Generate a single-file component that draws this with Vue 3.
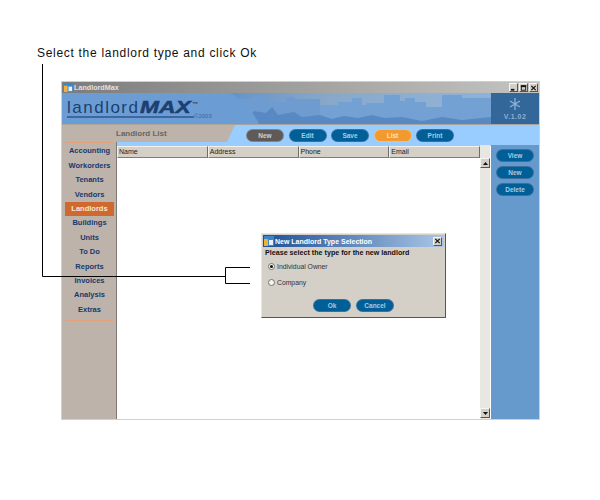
<script setup>
const menu = ['Accounting', 'Workorders', 'Tenants', 'Vendors', 'Landlords', 'Buildings', 'Units', 'To Do', 'Reports', 'Invoices', 'Analysis', 'Extras']
const toolbar = ['New', 'Edit', 'Save', 'List', 'Print']
const columns = ['Name', 'Address', 'Phone', 'Email']
const actions = ['View', 'New', 'Delete']
</script>

<template>
  <div class="page">
    <p class="caption">Select the landlord type and click Ok</p>

    <div class="window">
      <div class="titlebar">
        <svg class="app-icon" width="9" height="9" viewBox="0 0 10 10">
          <rect width="10" height="10" fill="#3a86c8" />
          <rect y="3" width="4" height="7" fill="#f0b040" />
          <rect x="5" y="4" width="4" height="5" fill="#e8f0f8" />
        </svg>
        <span class="title">LandlordMax</span>
        <div class="win-buttons">
          <span class="win-btn">
            <svg width="8" height="8" viewBox="0 0 8 8"><rect x="1" y="5" width="4" height="2" fill="#111" /></svg>
          </span>
          <span class="win-btn">
            <svg width="8" height="8" viewBox="0 0 8 8"><rect x="1.5" y="1.5" width="5" height="5" fill="none" stroke="#111" /><rect x="1" y="1" width="6" height="2" fill="#111" /></svg>
          </span>
          <span class="win-btn">
            <svg width="8" height="8" viewBox="0 0 8 8"><path d="M1.5 1.5 L6.5 6.5 M6.5 1.5 L1.5 6.5" stroke="#111" stroke-width="1.4" /></svg>
          </span>
        </div>
      </div>

      <div class="banner">
        <div class="banner-art">
          <svg class="skyline" width="429" height="31" viewBox="0 0 429 31">
            <defs>
              <linearGradient id="sky" x1="0" x2="1" y1="0" y2="0">
                <stop offset="0.38" stop-color="#6492c8" />
                <stop offset="0.62" stop-color="#88a8ca" />
                <stop offset="0.86" stop-color="#8fb0d2" />
                <stop offset="1" stop-color="#8db2da" />
              </linearGradient>
            </defs>
            <rect width="429" height="31" fill="url(#sky)" />
            <path d="M160 31 V6 H190 V2 H204 V9 H224 V4 H232 V6 H258 V31 Z" fill="#6f9cd0" />
            <path d="M258 31 V12 H276 V9 H290 V5 H300 V12 H304 V10 H322 V2 H338 V8 H343 V5 H353 V9 H364 V14 H380 V2 H400 V5 H429 V31 Z" fill="#74a1d4" />
            <path d="M170 31 L178 22 L188 22 L192 18 L204 20 L210 14 L216 22 L232 19 L240 24 L258 22 L270 26 L282 23 L296 25 L310 22 L322 25 L340 24 L360 28 L380 24 L400 27 L429 24 V31 Z" fill="#5889c2" />
            <path d="M0 0 H168 C182 8 192 20 197 31 H0 Z" fill="#6b9dd4" />
          </svg>
          <div class="logo">
            <span class="logo-light">landlord</span><span class="logo-bold">MAX</span><span class="logo-tm">™</span>
            <span class="logo-year">©2003</span>
          </div>
        </div>
        <div class="version">
          <svg width="14" height="14" viewBox="0 0 14 14">
            <path d="M7 1 V13 M2 4 L12 10 M12 4 L2 10" stroke="#8cb4dc" stroke-width="1.3" />
          </svg>
          <span class="version-text">V.1.02</span>
        </div>
      </div>

      <div class="toolbar">
        <div class="list-title">Landlord List</div>
        <div class="toolbar-buttons">
          <button
            v-for="b in toolbar"
            :key="b"
            class="pill"
            :class="{ grey: b === 'New', orange: b === 'List' }"
          >{{ b }}</button>
        </div>
      </div>

      <div class="body">
        <nav class="sidebar">
          <a v-for="m in menu" :key="m" class="menu-item" :class="{ active: m === 'Landlords' }">{{ m }}</a>
          <div class="menu-rule"></div>
        </nav>

        <div class="table">
          <div class="table-head">
            <span v-for="c in columns" :key="c" class="th">{{ c }}</span>
          </div>
        </div>

        <div class="scrollbar">
          <span class="scroll-btn">
            <svg width="5" height="3" viewBox="0 0 5 3"><path d="M2.5 0 L5 3 H0 Z" fill="#111" /></svg>
          </span>
          <span class="scroll-btn">
            <svg width="5" height="3" viewBox="0 0 5 3"><path d="M0 0 H5 L2.5 3 Z" fill="#111" /></svg>
          </span>
        </div>

        <div class="actions">
          <button v-for="a in actions" :key="a" class="pill">{{ a }}</button>
        </div>
      </div>
    </div>

    <!-- dialog floats over the list -->
    <div class="dialog">
      <div class="dialog-title">
        <svg class="app-icon" width="10" height="10" viewBox="0 0 10 10">
          <rect width="10" height="10" fill="#3a86c8" />
          <rect y="3" width="4" height="7" fill="#f0b040" />
          <rect x="5" y="4" width="4" height="5" fill="#e8f0f8" />
        </svg>
        <span>New Landlord Type Selection</span>
        <span class="win-btn dialog-close">
          <svg width="8" height="8" viewBox="0 0 8 8"><path d="M1.5 1.5 L6.5 6.5 M6.5 1.5 L1.5 6.5" stroke="#111" stroke-width="1.4" /></svg>
        </span>
      </div>
      <div class="dialog-body">
        <p class="question">Please select the type for the new landlord</p>
        <label class="radio-row"><span class="radio checked"></span>Individual Owner</label>
        <label class="radio-row"><span class="radio"></span>Company</label>
        <div class="dialog-buttons">
          <button class="pill">Ok</button>
          <button class="pill">Cancel</button>
        </div>
      </div>
    </div>

    <!-- callout lines -->
    <svg class="callout" width="600" height="500" viewBox="0 0 600 500">
      <path d="M42.5 64 V276.5 H225.5 M250 267.5 H225.5 V283.5 H250" fill="none" stroke="#000" />
    </svg>
  </div>
</template>

<style scoped>
.page {
  position: relative;
  width: 600px;
  height: 500px;
  background: #fff;
  overflow: hidden;
  font-family: "Liberation Sans", Arial, sans-serif;
}

.caption {
  margin: 0;
  padding: 46px 0 0 37px;
  height: 81px;
  box-sizing: border-box;
  font-size: 12px;
  line-height: 14px;
  letter-spacing: 0.7px;
  color: #111;
}

.window {
  margin-left: 61px;
  width: 479px;
  height: 339px;
  box-sizing: border-box;
  border: 1px solid #d4d0c8;
  display: flex;
  flex-direction: column;
}

.titlebar {
  height: 11px;
  flex: none;
  display: flex;
  align-items: center;
  gap: 1px;
  padding: 0 1px 0 2px;
  background: linear-gradient(to right, #7c7c7c, #c4c4c2);
  color: #e0e0e0;
  font-size: 7.2px;
  font-weight: bold;
}

.win-buttons {
  margin-left: auto;
  display: flex;
  gap: 1px;
}

.win-btn {
  width: 9px;
  height: 9px;
  display: flex;
  align-items: center;
  justify-content: center;
  background: #d4d0c8;
  border: 1px solid;
  border-color: #f4f4f0 #555 #555 #f4f4f0;
  box-sizing: border-box;
  overflow: hidden;
}

.banner {
  height: 32px;
  flex: none;
  display: flex;
  border-bottom: 1px solid #a8a49c;
  box-sizing: border-box;
}

.banner-art {
  flex: 1;
  position: relative;
  overflow: hidden;
  background: #6b9dd4;
}

.skyline {
  position: absolute;
  left: 0;
  top: 0;
}

.logo {
  position: relative;
  display: flex;
  align-items: baseline;
  padding: 5px 0 0 5px;
  height: 28px;
  box-sizing: border-box;
  color: #1c3f70;
}

.logo::after {
  content: "";
  position: absolute;
  left: 5px;
  top: 23px;
  width: 127px;
  height: 2px;
  background: #3a68a4;
}

.logo-light {
  width: 73px;
  font-size: 17px;
  letter-spacing: 1.5px;
  line-height: 20px;
  font-family: "Liberation Sans", sans-serif;
}

.logo-bold {
  display: inline-block;
  width: 52px;
  font-size: 17px;
  font-weight: bold;
  font-style: italic;
  line-height: 20px;
  color: #1d3f70;
  -webkit-text-stroke: 0.5px #1d3f70;
  transform: scaleX(1.34);
  transform-origin: left center;
  font-family: "Liberation Sans", sans-serif;
}

.logo-tm {
  font-size: 6px;
  font-weight: bold;
  align-self: flex-start;
  margin-top: 3px;
}

.logo-year {
  position: absolute;
  left: 132px;
  top: 20px;
  font-size: 6px;
  color: #3f6596;
}

.version {
  width: 48px;
  flex: none;
  background: #336699;
  display: flex;
  flex-direction: column;
  align-items: center;
  padding-top: 4px;
  box-sizing: border-box;
  color: #8cb0d6;
}

.version-text {
  font-size: 7px;
  font-weight: bold;
  letter-spacing: 0.5px;
  line-height: 9px;
  margin-top: 1px;
}

.toolbar {
  height: 21px;
  flex: none;
  display: flex;
  align-items: flex-start;
  background: #99ccff;
}

.list-title {
  width: 173px;
  height: 17px;
  flex: none;
  padding-left: 54px;
  box-sizing: border-box;
  background: #bdb3ab;
  clip-path: polygon(0 0, 100% 0, 165px 100%, 0 100%);
  color: #6b6560;
  font-size: 8px;
  font-weight: bold;
  line-height: 17px;
}

.toolbar-buttons {
  display: flex;
  gap: 6.5px;
  padding: 5px 0 0 12px;
}

.pill {
  width: 36px;
  height: 11px;
  flex: none;
  padding: 0;
  border: none;
  border-radius: 6px;
  background: #005f96;
  box-shadow: 0 0 0 1px #3a70a0;
  color: #a9cbe4;
  font-family: "Liberation Sans", sans-serif;
  font-size: 6.5px;
  font-weight: bold;
  line-height: 11px;
  text-align: center;
}

.pill.grey {
  background: #5f5a58;
  box-shadow: 0 0 0 1px #80858a;
  color: #d0d0d0;
}

.pill.orange {
  background: #f39a2e;
  box-shadow: 0 0 0 1px #f2bd7a;
  color: #ffe0b8;
}

.body {
  flex: 1;
  min-height: 0;
  display: flex;
}

.sidebar {
  width: 55px;
  flex: none;
  box-sizing: border-box;
  background: #bdb3ab;
  border-right: 1px solid #807a74;
  margin-top: -4px;
  padding: 0 2px 0 3px;
  display: flex;
  flex-direction: column;
  position: relative;
}

.sidebar::before {
  content: "";
  height: 1px;
  flex: none;
  background: #e2a27c;
  margin-bottom: 1.4px;
}

.menu-item {
  height: 14.4px;
  flex: none;
  line-height: 14px;
  text-align: center;
  font-size: 7.5px;
  font-weight: bold;
  color: #17396b;
  white-space: nowrap;
}

.menu-item.active {
  background: #d0692f;
  color: #f6e6d8;
}

.menu-rule {
  height: 1px;
  margin-top: 3px;
  background: #e2a27c;
}

.table {
  flex: 1;
  min-width: 0;
  background: #fff;
}

.table-head {
  display: grid;
  grid-template-columns: repeat(4, 1fr);
  height: 12px;
}

.th {
  box-sizing: border-box;
  background: #d4d0c8;
  border: 1px solid;
  border-color: #f2f0ea #6e6c68 #807c76 #f2f0ea;
  padding-left: 1px;
  font-size: 7px;
  line-height: 10px;
  color: #222;
}

.scrollbar {
  width: 10px;
  flex: none;
  margin-top: -1px;
  background: #e9e7e2;
  display: flex;
  flex-direction: column;
  justify-content: space-between;
  padding: 13px 0 1px;
  box-sizing: border-box;
}

.scroll-btn {
  width: 10px;
  height: 10px;
  display: flex;
  align-items: center;
  justify-content: center;
  background: #d4d0c8;
  border: 1px solid;
  border-color: #f4f4f0 #555 #555 #f4f4f0;
  box-sizing: border-box;
}

.actions {
  width: 48px;
  margin-left: 1px;
  margin-top: -1px;
  flex: none;
  background: #6699cc;
  display: flex;
  flex-direction: column;
  align-items: center;
  gap: 6px;
  padding-top: 5px;
  box-sizing: border-box;
}

.dialog {
  position: absolute;
  left: 261px;
  top: 233px;
  width: 185px;
  height: 85px;
  box-sizing: border-box;
  background: #d4d0c8;
  border: 1px solid;
  border-color: #e8e6e0 #555 #555 #e8e6e0;
  padding: 1px;
}

.dialog-title {
  height: 12px;
  display: flex;
  align-items: center;
  gap: 1px;
  padding: 0 2px 0 1px;
  background: linear-gradient(to right, #1f4f95, #a9c6e6);
  color: #fff;
  font-size: 7px;
  font-weight: bold;
}

.dialog-close {
  margin-left: auto;
}

.dialog-body {
  padding: 1px 0 0 2px;
}

.question {
  margin: 0;
  font-size: 7.15px;
  font-weight: bold;
  line-height: 10px;
  color: #111;
}

.radio-row {
  display: flex;
  align-items: center;
  gap: 2px;
  height: 16px;
  padding-left: 3px;
  font-size: 6.8px;
  color: #333;
}

.radio {
  width: 7px;
  height: 7px;
  flex: none;
  box-sizing: border-box;
  border-radius: 50%;
  background: #f4f4f0;
  border: 1px solid #77746e;
  position: relative;
}

.radio.checked::after {
  content: "";
  position: absolute;
  left: 1px;
  top: 1px;
  width: 3px;
  height: 3px;
  border-radius: 50%;
  background: #111;
}

.dialog-buttons {
  display: flex;
  justify-content: center;
  gap: 7px;
  margin: 10px 0 0 -2px;
}

.callout {
  position: absolute;
  left: 0;
  top: 0;
  pointer-events: none;
}
</style>
